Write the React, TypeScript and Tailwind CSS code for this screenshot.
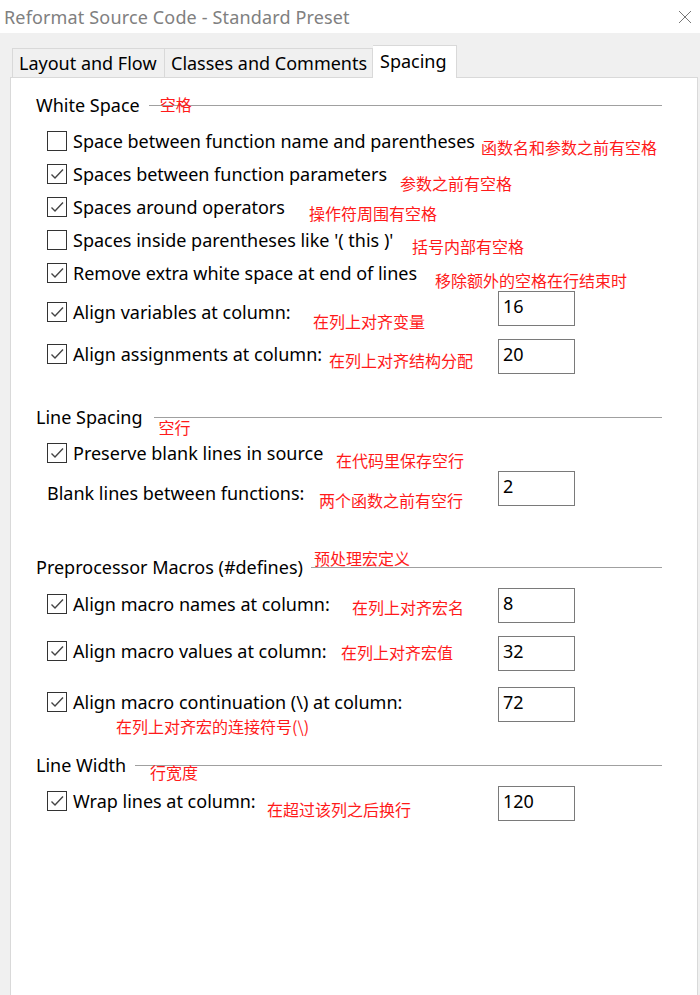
import React from "react";

const UI = "font-['Noto_Sans','Noto_Sans_CJK_SC',sans-serif]";
const CJK = "font-['Noto_Sans_CJK_SC',sans-serif]";

type RowProps = {
  checked?: boolean;
  noBox?: boolean;
  label: string;
  ann?: string;
  annX?: number; // absolute x of annotation
  annDy?: number; // annotation offset from label center
  value?: string;
  mt: number;
  labelTop?: number;
  below?: React.ReactNode;
};

function Check({ checked }: { checked: boolean }) {
  return (
    <span className="w-[20px] h-[20px] border border-[#333] bg-white flex items-center justify-center shrink-0">
      {checked && (
        <svg width="18" height="18" viewBox="0 0 18 18">
          <path d="M3.5 9.5 L7 13 L15 4.5" fill="none" stroke="#444" strokeWidth="1.4" />
        </svg>
      )}
    </span>
  );
}

function Row({ checked = false, noBox, label, ann, annX = 0, annDy = 6, value, mt, labelTop = 0, below }: RowProps) {
  return (
    <div className="grid grid-cols-[451px_77px]" style={{ marginTop: mt }}>
      <div className="flex flex-col" style={{ paddingTop: labelTop }}>
        <div className="flex items-start h-[24px]">
          <div className="flex items-center gap-[6px] h-[24px] shrink-0" style={{ width: annX ? annX - 47 : undefined }}>
            {!noBox && <Check checked={checked} />}
            <span className="text-[18px] leading-[24px] text-black whitespace-nowrap">{label}</span>
          </div>
          {ann && (
            <span className={`${CJK} text-[16px] leading-[20px] text-[#ff1a1a] whitespace-nowrap`} style={{ marginTop: 2 + annDy }}>
              {ann}
            </span>
          )}
        </div>
        {below}
      </div>
      {value !== undefined ? (
        <div className="h-[35px] border border-[#7a7a7a] bg-white pl-[4px] flex items-start pt-[2px]">
          <span className="text-[18px] leading-[24px] text-black">{value}</span>
        </div>
      ) : (
        <div />
      )}
    </div>
  );
}

function Header({ title, mt, gap, ann, annLeft, annTop }: { title: string; mt: number; gap: number; ann: string; annLeft: number; annTop: number }) {
  return (
    <div className="flex items-center h-[24px] pl-[25px] pr-[35px]" style={{ marginTop: mt }}>
      <span className="text-[18px] leading-[24px] text-black whitespace-nowrap">{title}</span>
      <div className="relative flex-1 h-px bg-[#a0a0a0]" style={{ marginLeft: gap }}>
        <span
          className={`${CJK} absolute text-[16px] leading-[20px] text-[#ff1a1a] whitespace-nowrap`}
          style={{ left: annLeft, top: annTop }}
        >
          {ann}
        </span>
      </div>
    </div>
  );
}

export default function App() {
  return (
    <div className={`${UI} w-[700px] h-[995px] overflow-hidden bg-[#f0f0f0] flex flex-col`}>
      {/* title bar */}
      <div className="h-[33px] bg-white flex items-center justify-between pl-[4px] pr-[8px] shrink-0">
        <span className="text-[18px] text-[#808080] leading-[24px] tracking-[0.15px]">Reformat Source Code - Standard Preset</span>
        <svg width="14" height="14" viewBox="0 0 14 14">
          <path d="M1 1 L13 13 M13 1 L1 13" stroke="#777" strokeWidth="1" />
        </svg>
      </div>

      {/* tabs */}
      <div className="flex items-end pl-[12px] pt-[12px] shrink-0 relative z-10">
        <div className="w-[153px] h-[29px] border border-b-0 border-[#d9d9d9] bg-[#f0f0f0] flex items-center pl-[6px] text-[18px] leading-[24px]">
          Layout and Flow
        </div>
        <div className="w-[208px] h-[29px] border border-b-0 border-l-0 border-[#d9d9d9] bg-[#f0f0f0] flex items-center pl-[6px] text-[18px] leading-[24px]">
          Classes and Comments
        </div>
        <div className="w-[84px] h-[33px] -mb-px border border-b-0 border-l-0 border-[#d9d9d9] bg-white flex items-center pl-[7px] pb-[2px] text-[18px] leading-[24px]">
          Spacing
        </div>
      </div>

      {/* panel */}
      <div className="ml-[10px] w-[688px] flex-1 bg-white border border-b-0 border-[#d9d9d9] flex flex-col">
        <Header title="White Space" mt={15} gap={9} ann="空格" annLeft={11} annTop={-11} />
        <div className="pl-[36px] flex flex-col">
          <Row label="Space between function name and parentheses" ann="函数名和参数之前有空格" annX={481} annDy={6} mt={12} />
          <Row checked label="Spaces between function parameters" ann="参数之前有空格" annX={400} annDy={9} mt={9} />
          <Row checked label="Spaces around operators" ann="操作符周围有空格" annX={309} annDy={6} mt={9} />
          <Row label="Spaces inside parentheses like '( this )'" ann="括号内部有空格" annX={412} annDy={6} mt={9} />
          <Row checked label="Remove extra white space at end of lines" ann="移除额外的空格在行结束时" annX={435} annDy={7} mt={9} />
          <Row checked label="Align variables at column:" ann="在列上对齐变量" annX={313} annDy={9} value="16" mt={6} labelTop={9} />
          <Row checked label="Align assignments at column:" ann="在列上对齐结构分配" annX={329} annDy={6} value="20" mt={13} labelTop={3} />
        </div>

        <Header title="Line Spacing" mt={31} gap={11} ann="空行" annLeft={5} annTop={0} />
        <div className="pl-[36px] flex flex-col">
          <Row checked label="Preserve blank lines in source" ann="在代码里保存空行" annX={336} annDy={7} mt={12} />
          <Row noBox label="Blank lines between functions:" ann="两个函数之前有空行" annX={319} annDy={7} value="2" mt={6} labelTop={10} />
        </div>

        <Header title="Preprocessor Macros (#defines)" mt={49} gap={8} ann="预处理宏定义" annLeft={3} annTop={-19} />
        <div className="pl-[36px] flex flex-col">
          <Row checked label="Align macro names at column:" ann="在列上对齐宏名" annX={352} annDy={3} value="8" mt={9} labelTop={4} />
          <Row checked label="Align macro values at column:" ann="在列上对齐宏值" annX={341} annDy={1} value="32" mt={13} labelTop={3} />
          <Row
            checked
            label="Align macro continuation (\) at column:"
            value="72"
            mt={16}
            labelTop={3}
            below={
              <span className={`${CJK} ml-[69px] mt-[2px] text-[16px] leading-[20px] text-[#ff1a1a] whitespace-nowrap`}>
                在列上对齐宏的连接符号(\)
              </span>
            }
          />
        </div>

        <Header title="Line Width" mt={17} gap={9} ann="行宽度" annLeft={15} annTop={-3} />
        <div className="pl-[36px] flex flex-col">
          <Row checked label="Wrap lines at column:" ann="在超过该列之后换行" annX={267} annDy={8} value="120" mt={9} labelTop={3} />
        </div>
      </div>
    </div>
  );
}
